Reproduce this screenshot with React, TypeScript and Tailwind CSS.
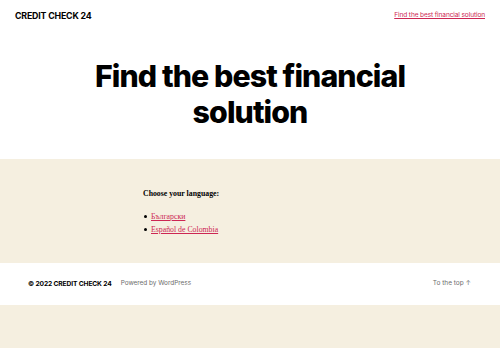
export default function App() {
  return (
    <div className="w-[500px] min-h-[348px] bg-[#f5efe0]" style={{ fontFamily: "Inter, 'Liberation Sans', sans-serif" }}>
      <header className="bg-white h-[159px] flex flex-col">
        <div className="flex justify-between items-center px-[15px] pt-[5px] h-[26px]">
          <div className="text-[8.8px] font-bold tracking-[-0.02em] text-black">CREDIT CHECK 24</div>
          <a href="#" className="text-[6.6px] text-[#cd2653] underline tracking-[-0.02em]">Find the best financial solution</a>
        </div>
        <h1 className="mt-[32px] text-center text-[30.3px] leading-[36px] font-extrabold tracking-[-0.03em] text-black">
          Find the best financial<br />solution
        </h1>
      </header>
      <section className="h-[104px] pt-[29px] pl-[143px]" style={{ fontFamily: "'Liberation Serif', serif" }}>
        <p className="text-[7.8px] font-bold text-black">Choose your language:</p>
        <ul className="mt-[10px] text-[7.8px] leading-[13px]">
          <li className="flex items-center"><span className="w-[3px] h-[3px] rounded-full bg-black mr-[4px] ml-[1px]"></span><a href="#" className="text-[#cd2653] underline">Български</a></li>
          <li className="flex items-center"><span className="w-[3px] h-[3px] rounded-full bg-black mr-[4px] ml-[1px]"></span><a href="#" className="text-[#cd2653] underline">Español de Colombia</a></li>
        </ul>
      </section>
      <footer className="bg-white h-[42px] flex items-center justify-between pl-[28px] pr-[29px]">
        <div className="flex items-center gap-[9px]">
          <span className="text-[6.7px] font-bold text-black tracking-[-0.02em]">© 2022 CREDIT CHECK 24</span>
          <span className="text-[6.4px] text-[#6d6d6d]">Powered by WordPress</span>
        </div>
        <span className="text-[6.5px] text-[#6d6d6d]">To the top ↑</span>
      </footer>
    </div>
  );
}
